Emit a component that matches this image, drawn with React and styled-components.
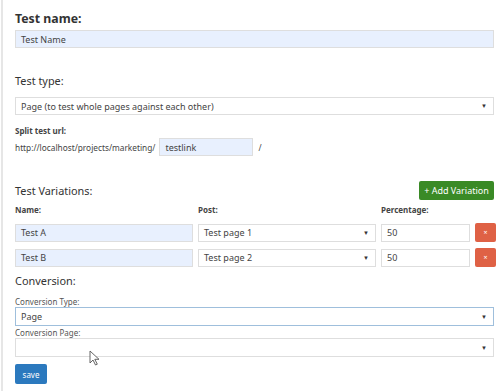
import React from "react";
import styled, { createGlobalStyle } from "styled-components";

const Global = createGlobalStyle`
  html, body { margin: 0; padding: 0; background: #fff; }
  body { font-family: "Noto Sans", "Open Sans", sans-serif; color: #333; }
  * { box-sizing: border-box; }
`;

const Page = styled.div`
  position: relative;
  width: 501px;
  height: 391px;
  margin-left: 1px;
  border-left: 2px solid #e6e6e6;
  padding: 11px 8px 0 12px;
  display: flex;
  flex-direction: column;
  overflow: hidden;
`;

const Title = styled.div`
  font-size: 12.3px;
  font-weight: 700;
  color: #333;
  line-height: 15px;
  margin-bottom: 4px;
`;

const Section = styled.div`
  font-size: 10.9px;
  color: #333;
  line-height: 14px;
  margin-top: ${(p) => p.$mt || 0}px;
  margin-bottom: ${(p) => p.$mb || 0}px;
`;

const Label = styled.div`
  font-size: 8px;
  font-weight: 700;
  color: #444;
  line-height: 10px;
  margin-top: ${(p) => p.$mt || 0}px;
  margin-bottom: ${(p) => p.$mb || 0}px;
`;

const SmallLabel = styled.div`
  font-size: 8px;
  color: #555;
  line-height: 10px;
  margin-top: ${(p) => p.$mt || 0}px;
`;

const Field = styled.div`
  height: ${(p) => p.$h || 18}px;
  width: ${(p) => (p.$w ? p.$w + "px" : "100%")};
  border: 1px solid ${(p) => (p.$focus ? "#9fbfdc" : "#dedede")};
  background: ${(p) => (p.$filled ? "#e8f0fe" : "#fff")};
  font-size: 9px;
  color: #444;
  padding: 0 5px;
  display: flex;
  align-items: center;
  justify-content: space-between;
  margin-bottom: ${(p) => p.$mb || 0}px;
  white-space: nowrap;
`;

const Arrow = styled.span`
  font-size: 6px;
  color: #333;
  margin-right: 1px;
`;

const UrlRow = styled.div`
  display: flex;
  align-items: center;
  gap: 4px;
  font-size: 8.3px;
  color: #444;
`;

const Slash = styled.span`
  margin-left: 1px;
`;

const HeadRow = styled.div`
  display: flex;
  justify-content: space-between;
  align-items: center;
  margin-top: 25px;
`;

const Button = styled.div`
  background: ${(p) => p.$bg};
  color: #fff;
  font-size: ${(p) => p.$fs || 9}px;
  height: ${(p) => p.$h || 19}px;
  width: ${(p) => p.$w}px;
  border-radius: 2px;
  display: flex;
  align-items: center;
  justify-content: center;
`;

const Grid = styled.div`
  display: grid;
  grid-template-columns: 178px 178px 89px 21px;
  column-gap: 5px;
  row-gap: 6px;
  align-items: center;
  margin-top: ${(p) => p.$mt || 0}px;
`;

const Cursor = styled.svg`
  position: absolute;
  left: 86px;
  top: 350px;
`;

const rows = [
  { name: "Test A", post: "Test page 1", pct: "50" },
  { name: "Test B", post: "Test page 2", pct: "50" },
];

export default function App() {
  return (
    <>
      <Global />
      <Page>
        <Title>Test name:</Title>
        <Field $filled>Test Name</Field>

        <Section $mt={26} $mb={9}>Test type:</Section>
        <Field>
          Page (to test whole pages against each other)
          <Arrow>▼</Arrow>
        </Field>

        <Label $mt={11} $mb={2}>Split test url:</Label>
        <UrlRow>
          http://localhost/projects/marketing/
          <Field $filled $w={94}>testlink</Field>
          <Slash>/</Slash>
        </UrlRow>

        <HeadRow>
          <Section>Test Variations:</Section>
          <Button $bg="#3a8a26" $w={75}>+ Add Variation</Button>
        </HeadRow>

        <Grid $mt={5}>
          <Label>Name:</Label>
          <Label>Post:</Label>
          <Label>Percentage:</Label>
          <span />
        </Grid>
        <Grid $mt={8}>
          {rows.map((r) => (
            <React.Fragment key={r.name}>
              <Field $filled>{r.name}</Field>
              <Field>
                {r.post}
                <Arrow>▼</Arrow>
              </Field>
              <Field>{r.pct}</Field>
              <Button $bg="#df6145" $w={21} $h={19} $fs={7}>×</Button>
            </React.Fragment>
          ))}
        </Grid>

        <Section $mt={7}>Conversion:</Section>
        <SmallLabel $mt={9}>Conversion Type:</SmallLabel>
        <Field $focus $h={19}>
          Page
          <Arrow>▼</Arrow>
        </Field>
        <SmallLabel $mt={2}>Conversion Page:</SmallLabel>
        <Field $h={19} $mb={7}>
          <span />
          <Arrow>▼</Arrow>
        </Field>
        <Button $bg="#2b79be" $w={32} $h={20} $fs={8}>save</Button>

        <Cursor width="11" height="16" viewBox="0 0 11 16">
          <path d="M1 1 L1 13 L4 10 L6.5 15 L8.3 14.2 L5.8 9.3 L10 9.3 Z" fill="#fff" stroke="#555" strokeWidth="0.9" />
        </Cursor>
      </Page>
    </>
  );
}
